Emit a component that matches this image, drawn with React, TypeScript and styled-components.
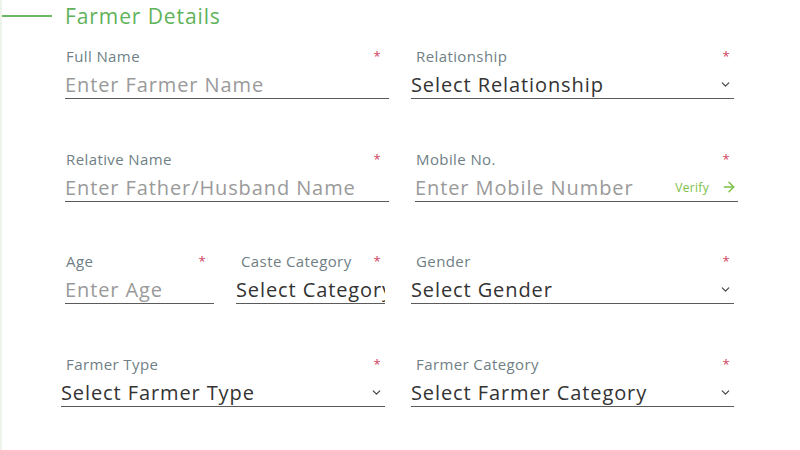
import React from 'react'
import styled, { createGlobalStyle } from 'styled-components'
import { ArrowRight, ChevronDown } from 'lucide-react'

const GlobalStyle = createGlobalStyle`
  html, body {
    margin: 0;
    padding: 0;
    background: #ffffff;
  }
  body {
    font-family: 'Open Sans', 'Liberation Sans', sans-serif;
  }
`

const Page = styled.div`
  width: 800px;
  height: 450px;
  box-sizing: border-box;
  border-left: 2px solid #eef4e9;
  padding-top: 2px;
  overflow: hidden;
`

const Header = styled.div`
  display: flex;
  align-items: center;
  gap: 13px;
  height: 28px;
  margin-left: -2px;

  .line {
    width: 52px;
    height: 1.5px;
    background: #6cb865;
  }

  h3 {
    margin: 0;
    font-weight: 400;
    font-size: 21px;
    color: #5fb35a;
    letter-spacing: 0.9px;
  }
`

const Grid = styled.div`
  display: grid;
  grid-template-columns: 324px 323px;
  column-gap: 26px;
  row-gap: 49.5px;
  margin: 16px 0 0 63px;
`

const Split = styled.div`
  display: grid;
  grid-template-columns: 149px 149px;
  column-gap: 26px;
`

const Field = styled.div`
  display: flex;
  flex-direction: column;
  min-width: 0;
`

const LabelRow = styled.div`
  display: flex;
  justify-content: space-between;
  align-items: center;
  height: 20px;
  padding: 0 8px 0 1px;
  font-size: 15px;
  letter-spacing: 0.4px;
  color: #6f7f85;

  .req {
    color: #d0435d;
    font-size: 13px;
  }
`

const InputBox = styled.div<{ $select?: boolean }>`
  display: flex;
  align-items: center;
  height: 33px;
  padding-top: 5px;
  box-sizing: border-box;
  border-bottom: 1.5px solid #5b5b5b;
  margin-left: ${({ $select }) => ($select ? '-4px' : '0')};
  margin-right: ${({ $select }) => ($select ? '4px' : '0')};
  overflow: hidden;
`

const Value = styled.span<{ $placeholder?: boolean }>`
  flex: 1;
  min-width: 0;
  white-space: nowrap;
  overflow: hidden;
  font-size: 20px;
  letter-spacing: 0.9px;
  color: ${({ $placeholder }) => ($placeholder ? '#9a9a9a' : '#333333')};
`

const Verify = styled.span`
  display: flex;
  align-items: center;
  gap: 12px;
  font-size: 12px;
  letter-spacing: 0.3px;
  color: #7cc045;
  padding-right: 1px;
`

const Chevron = styled.span`
  display: flex;
  color: #444;
  padding-right: 2px;
`

type FieldProps = {
  label: string
  value: string
  select?: boolean
  verify?: boolean
  noArrow?: boolean
}

const FormField = ({ label, value, select, verify, noArrow }: FieldProps) => (
  <Field>
    <LabelRow>
      <span>{label}</span>
      <span className="req">*</span>
    </LabelRow>
    <InputBox $select={select}>
      <Value $placeholder={!select}>{value}</Value>
      {select && !noArrow && (
        <Chevron>
          <ChevronDown size={13} strokeWidth={2.2} />
        </Chevron>
      )}
      {verify && (
        <Verify>
          Verify
          <ArrowRight size={16} strokeWidth={2.2} />
        </Verify>
      )}
    </InputBox>
  </Field>
)

export default function App() {
  return (
    <Page>
      <GlobalStyle />
      <Header>
        <div className="line" />
        <h3>Farmer Details</h3>
      </Header>
      <Grid>
        <FormField label="Full Name" value="Enter Farmer Name" />
        <FormField label="Relationship" value="Select Relationship" select />
        <FormField label="Relative Name" value="Enter Father/Husband Name" />
        <FormField label="Mobile No." value="Enter Mobile Number" verify />
        <Split>
          <FormField label="Age" value="Enter Age" />
          <FormField label="Caste Category" value="Select Category" select noArrow />
        </Split>
        <FormField label="Gender" value="Select Gender" select />
        <FormField label="Farmer Type" value="Select Farmer Type" select />
        <FormField label="Farmer Category" value="Select Farmer Category" select />
      </Grid>
    </Page>
  )
}
